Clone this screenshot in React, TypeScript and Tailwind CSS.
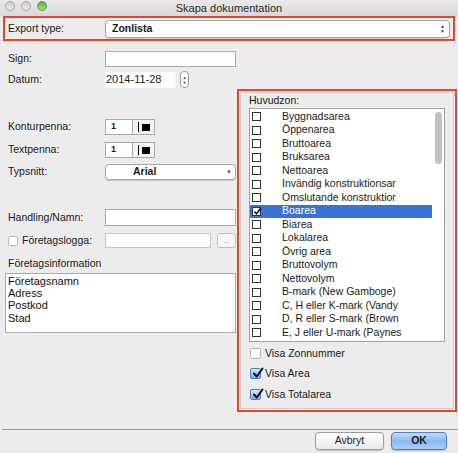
import React from 'react';

const zones = [
  'Byggnadsarea',
  'Öppenarea',
  'Bruttoarea',
  'Bruksarea',
  'Nettoarea',
  'Invändig konstruktionsar',
  'Omslutande konstruktior',
  'Boarea',
  'Biarea',
  'Lokalarea',
  'Övrig area',
  'Bruttovolym',
  'Nettovolym',
  'B-mark (New Gamboge)',
  'C, H eller K-mark (Vandy',
  'D, R eller S-mark (Brown',
  'E, J eller U-mark (Paynes',
];

function Row({ label, children, className = '' }: { label: React.ReactNode; children: React.ReactNode; className?: string }) {
  return (
    <div className={`flex items-center ${className}`}>
      <div className="w-[105px] pl-[8px] text-[#1a1a1a]">{label}</div>
      {children}
    </div>
  );
}

function PenBox() {
  return (
    <div className="flex h-[16px] w-[50px] border border-[#a9a9a9] bg-white">
      <div className="flex w-[26px] items-center pl-[5px] text-[9px] font-bold">1</div>
      <div className="flex flex-1 items-center gap-[3px] border-l border-[#a9a9a9] bg-[#f4f4f4] pl-[5px]">
        <div className="h-[10px] w-px bg-black" />
        <div className="h-[7px] w-[8px] bg-black" />
      </div>
    </div>
  );
}

function Check({ checked, aqua }: { checked?: boolean; aqua?: boolean }) {
  if (aqua) {
    return (
      <div className={`relative h-[11px] w-[11px] rounded-[2px] border ${checked ? 'border-[#4d7fc3] bg-gradient-to-b from-[#d8e8fb] to-[#7eaee8]' : 'border-[#b5b5b5] bg-white'}`}>
        {checked && (
          <svg viewBox="0 0 12 12" className="absolute -top-[2px] left-[1px] h-[12px] w-[12px]">
            <path d="M2 6.5 L4.8 9.5 L10.5 1.5" fill="none" stroke="#111" strokeWidth="2" strokeLinecap="round" strokeLinejoin="round" />
          </svg>
        )}
      </div>
    );
  }
  return (
    <div className="relative h-[9px] w-[9px] border border-[#333] bg-white">
      {checked && (
        <svg viewBox="0 0 10 10" className="absolute left-0 top-[-1px] h-[9px] w-[9px]">
          <path d="M1.5 5 L4 7.5 L8.5 1.5" fill="none" stroke="#111" strokeWidth="1.8" />
        </svg>
      )}
    </div>
  );
}

export default function App() {
  return (
    <div
      className="relative h-[453px] w-[458px] overflow-hidden bg-[#ececec] text-[10.5px] text-[#1a1a1a]"
      style={{ fontFamily: '"Liberation Sans", Arial, sans-serif' }}
    >
      {/* title bar */}
      <div className="relative flex h-[16px] items-center justify-center bg-gradient-to-b from-[#e9e9e9] to-[#d9d9d9]">
        <div className="absolute left-[5px] top-[1px] flex gap-[6px]">
          <div className="h-[10px] w-[10px] rounded-full border border-[#a8a8a8] bg-gradient-to-b from-[#cfcfcf] to-[#e8e8e8]" />
          <div className="h-[10px] w-[10px] rounded-full border border-[#a8a8a8] bg-gradient-to-b from-[#cfcfcf] to-[#e8e8e8]" />
          <div className="h-[10px] w-[10px] rounded-full border border-[#5b9a3c] bg-gradient-to-b from-[#5fae3a] to-[#a9dc7d]" />
        </div>
        <span className="pt-[1px] text-[11px] text-[#2a2a2a]">Skapa dokumentation</span>
      </div>

      {/* export type */}
      <div className="mx-[3px] flex h-[25px] items-center border-2 border-[#e0472f]">
        <div className="w-[100px] pl-[3px]">Export type:</div>
        <div className="mr-[3px] flex h-[18px] flex-1 items-center justify-between rounded-[4px] border border-[#a5a5a5] bg-white pl-[6px] pr-[4px] shadow-[0_1px_1px_rgba(0,0,0,0.15)]">
          <span className="font-bold">Zonlista</span>
          <span className="flex flex-col text-[5px] leading-[5px] text-[#444]">
            <span>▲</span>
            <span>▼</span>
          </span>
        </div>
      </div>

      <div className="flex">
        {/* left column */}
        <div className="flex w-[237px] flex-col">
          <Row label="Sign:" className="mt-[10px]">
            <div className="h-[16px] w-[131px] border border-[#a9a9a9] bg-white" />
          </Row>
          <Row label="Datum:" className="mt-[4px]">
            <div className="flex h-[16px] w-[70px] items-center bg-white pl-[1px] text-[11px]">2014-11-28</div>
            <div className="ml-[5px] flex h-[17px] w-[9px] flex-col items-center justify-center rounded-[4px] border border-[#9a9a9a] bg-white text-[4px] leading-[5px] text-[#333]">
              <span>▲</span>
              <span>▼</span>
            </div>
          </Row>
          <Row label="Konturpenna:" className="mt-[31px]">
            <PenBox />
          </Row>
          <Row label="Textpenna:" className="mt-[7px]">
            <PenBox />
          </Row>
          <Row label="Typsnitt:" className="mt-[6px]">
            <div className="relative flex h-[16px] w-[131px] items-center rounded-[4px] border border-[#a5a5a5] bg-white pl-[27px] shadow-[0_1px_1px_rgba(0,0,0,0.15)]">
              <span className="font-bold">Arial</span>
              <span className="absolute right-[3px] top-[3px] text-[6px] text-[#555]">▼</span>
            </div>
          </Row>
          <Row label="Handling/Namn:" className="mt-[29px]">
            <div className="h-[17px] w-[131px] border border-[#a9a9a9] bg-white" />
          </Row>
          <div className="mt-[7px] flex items-center">
            <div className="flex w-[105px] items-center gap-[4px] pl-[8px]">
              <div className="h-[10px] w-[10px] rounded-[2px] border border-[#b8b8b8] bg-white" />
              <span>Företagslogga:</span>
            </div>
            <div className="h-[15px] w-[106px] border border-[#c5c5c5] bg-white" />
            <div className="ml-[6px] flex h-[15px] w-[19px] items-end justify-center rounded-[3px] border border-[#c0c0c0] bg-[#f7f7f7] pb-[2px] text-[8px] leading-none text-[#888]">...</div>
          </div>
          <div className="mt-[8px] flex h-[14px] items-center pl-[8px]">Företagsinformation</div>
          <div className="ml-[5px] mt-[2px] h-[60px] w-[231px] border border-[#a9a9a9] bg-white px-[2px] pt-[1px] text-[11px] leading-[12.3px] text-[#111]">
            <div>Företagsnamn</div>
            <div>Adress</div>
            <div>Postkod</div>
            <div>Stad</div>
          </div>
        </div>

        {/* right column */}
        <div className="mt-[48px] h-[323px] w-[220px] border-2 border-[#e0472f] p-[1px]">
          <div className="h-full border border-[#cfcfcf] px-[8px]">
            <div className="flex h-[14px] items-center pt-[2px]">Huvudzon:</div>
            <div className="relative mt-[1px] h-[234px] overflow-hidden border border-[#9f9f9f] bg-white">
              <div className="pt-[1px]">
                {zones.map((z) => {
                  const sel = z === 'Boarea';
                  return (
                    <div
                      key={z}
                      className={`flex h-[13.5px] w-[184px] items-center pl-[2px] ${sel ? 'bg-[#3a73d4] text-white' : ''}`}
                    >
                      <Check checked={sel} />
                      <span className="ml-[21px] whitespace-nowrap">{z}</span>
                    </div>
                  );
                })}
              </div>
              <div className="absolute right-0 top-0 h-full w-[12px] bg-white">
                <div className="ml-[3px] mt-[3px] h-[52px] w-[7px] rounded-full bg-[#c1c1c1]" />
              </div>
            </div>
            <div className="mt-[4px] flex h-[15px] items-center gap-[4px] pl-[1px]">
              <Check aqua />
              <span>Visa Zonnummer</span>
            </div>
            <div className="mt-[5px] flex h-[15px] items-center gap-[4px] pl-[1px]">
              <Check aqua checked />
              <span>Visa Area</span>
            </div>
            <div className="mt-[6px] flex h-[15px] items-center gap-[4px] pl-[1px]">
              <Check aqua checked />
              <span>Visa Totalarea</span>
            </div>
          </div>
        </div>
      </div>

      {/* footer */}
      <div className="ml-[2px] mt-[17px] h-px bg-[#9a9a9a]" />
      <div className="mt-[2px] flex justify-end gap-[7px] pr-[11px]">
        <div className="flex h-[18px] w-[69px] items-center justify-center rounded-[4px] border border-[#9d9d9d] bg-gradient-to-b from-white to-[#e9e9e9] shadow-[0_1px_1px_rgba(0,0,0,0.2)]">
          Avbryt
        </div>
        <div className="flex h-[18px] w-[56px] items-center justify-center rounded-[4px] border border-[#4e7fc8] bg-gradient-to-b from-[#c5dcf8] via-[#8ab8ee] to-[#a9cff6] font-bold shadow-[0_1px_1px_rgba(0,0,0,0.2)]">
          OK
        </div>
      </div>
    </div>
  );
}
